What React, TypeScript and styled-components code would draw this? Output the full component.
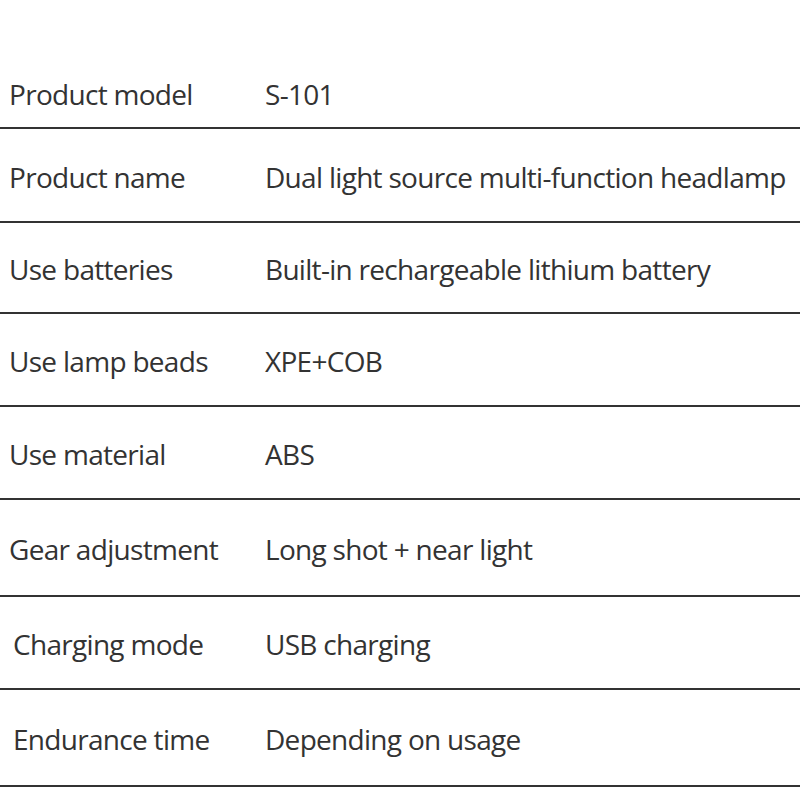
import styled, { createGlobalStyle } from "styled-components";

const GlobalStyle = createGlobalStyle`
  html, body {
    margin: 0;
    padding: 0;
    background: #ffffff;
  }
  body {
    font-family: "Open Sans", "Noto Sans", sans-serif;
    color: #333333;
  }
`;

type Spec = {
  label: string;
  value: string;
  height: number;
  indent?: number;
};

const specs: Spec[] = [
  { label: "Product model", value: "S-101", height: 129 },
  { label: "Product name", value: "Dual light source multi-function headlamp", height: 94 },
  { label: "Use batteries", value: "Built-in rechargeable lithium battery", height: 91 },
  { label: "Use lamp beads", value: "XPE+COB", height: 93 },
  { label: "Use material", value: "ABS", height: 93 },
  { label: "Gear adjustment", value: "Long shot + near light", height: 97 },
  { label: "Charging mode", value: "USB charging", height: 93, indent: 4 },
  { label: "Endurance time", value: "Depending on usage", height: 97, indent: 4 },
];

export default function App() {
  return (
    <>
      <GlobalStyle />
      <Table>
        {specs.map((s, i) => (
          <Row key={s.label} $height={s.height} $first={i === 0}>
            <Label $indent={s.indent ?? 0}>{s.label}</Label>
            <Value>{s.value}</Value>
          </Row>
        ))}
      </Table>
    </>
  );
}

const Table = styled.div`
  width: 800px;
  display: flex;
  flex-direction: column;
`;

const Row = styled.div<{ $height: number; $first: boolean }>`
  box-sizing: border-box;
  height: ${(p) => p.$height}px;
  display: flex;
  align-items: ${(p) => (p.$first ? "flex-end" : "center")};
  padding: ${(p) => (p.$first ? "0 0 19px" : "3px 0 0")};
  border-bottom: 2px solid #333333;
`;

const Label = styled.div<{ $indent: number }>`
  width: 265px;
  flex-shrink: 0;
  box-sizing: border-box;
  padding-left: ${(p) => 9 + p.$indent}px;
  font-size: 28px;
  line-height: 1;
  letter-spacing: -0.7px;
  white-space: nowrap;
`;

const Value = styled.div`
  font-size: 28px;
  line-height: 1;
  letter-spacing: -0.7px;
  white-space: nowrap;
`;
